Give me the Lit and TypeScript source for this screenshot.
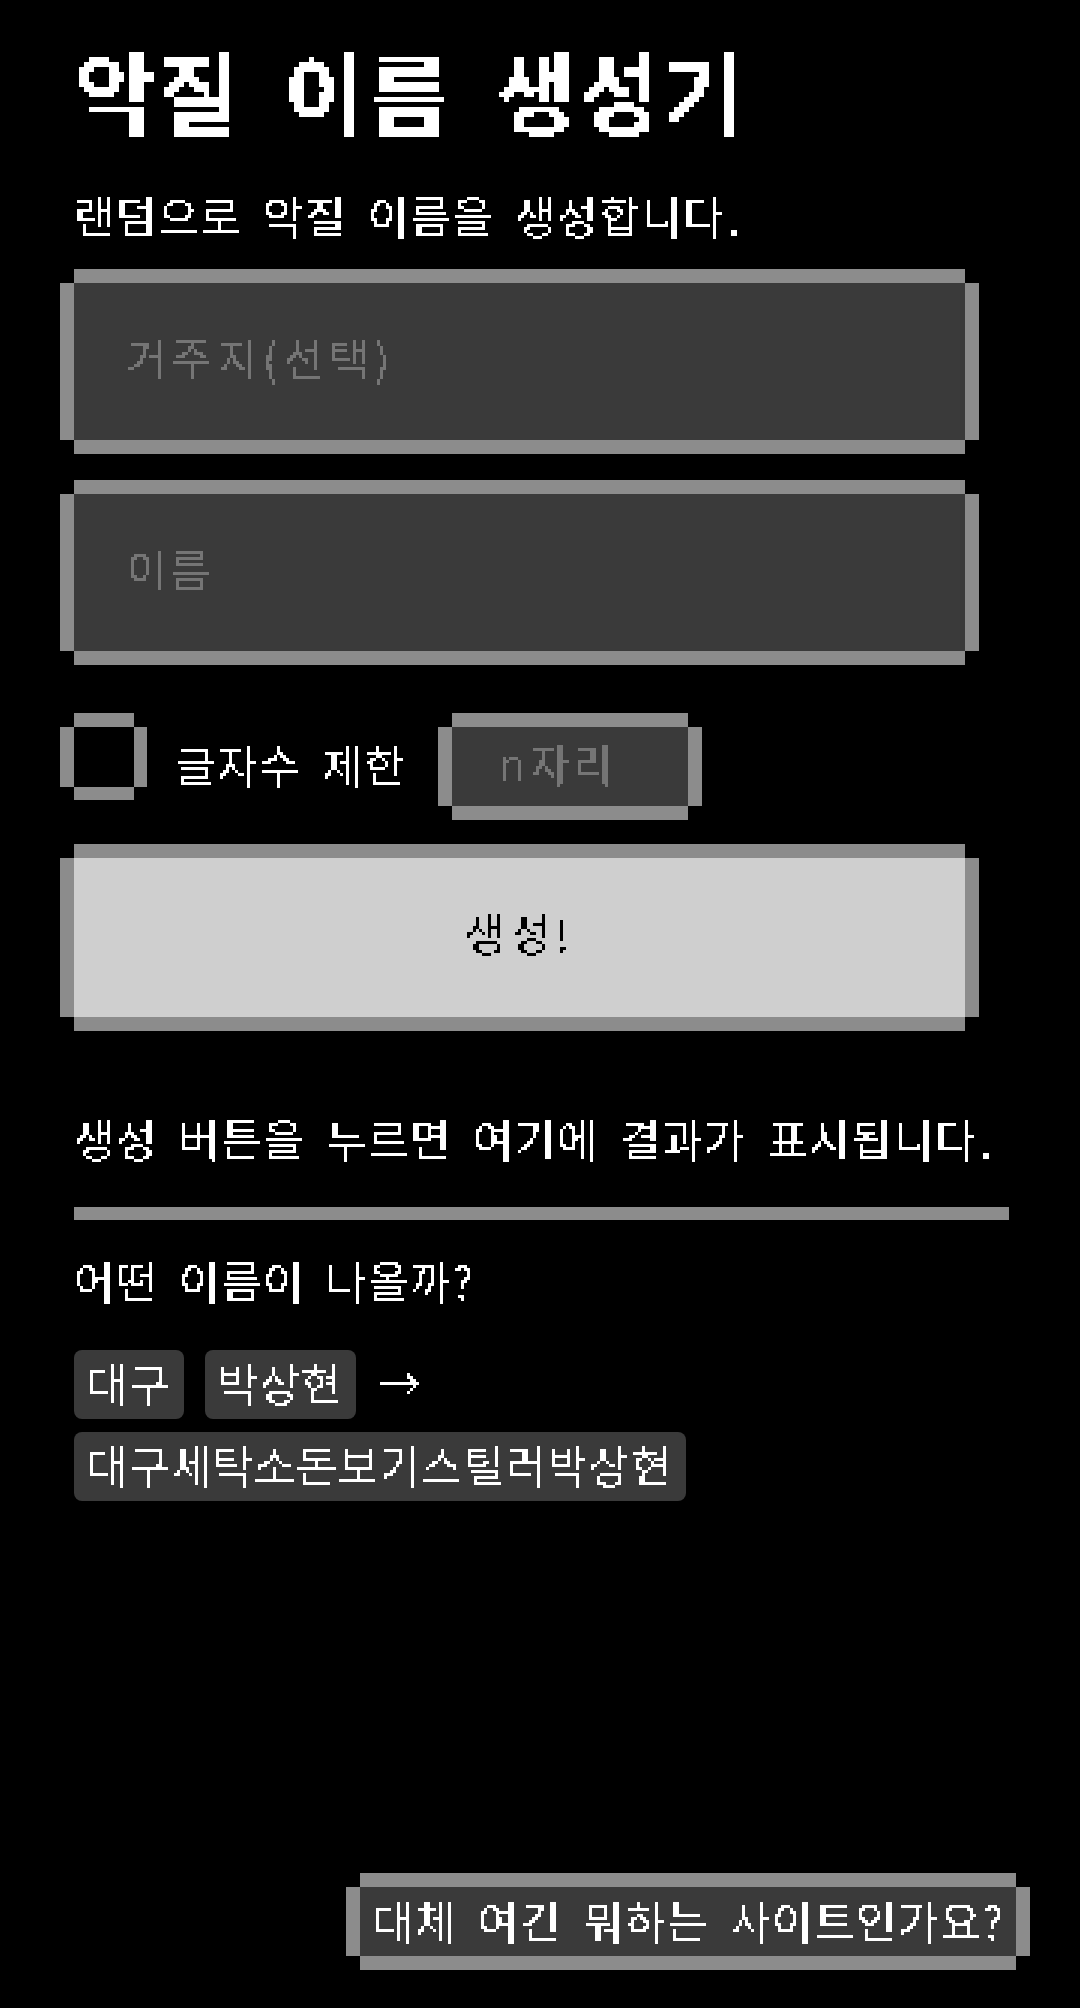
import { LitElement, html, css } from "lit";
import { customElement } from "lit/decorators.js";

@customElement("app-root")
export class AppRoot extends LitElement {
  static styles = css`
    :host {
      display: block;
      position: relative;
      width: 1080px;
      height: 2008px;
      overflow: hidden;
      background: #000;
      color: #fff;
      font-family: "Noto Sans CJK KR", "Noto Sans", sans-serif;
      font-size: 44px;
      letter-spacing: 1.52px;
      word-spacing: 9.6px;
      line-height: 42px;
    }
    .defs { position: absolute; width: 0; height: 0; }
    .page {
      box-sizing: border-box;
      width: 1080px;
      padding: 47px 71px 0 74px;
      display: flex;
      flex-direction: column;
    }
    .tx { filter: url(#px3); }
    h1 {
      margin: 0;
      font-size: 88px;
      line-height: 84px;
      letter-spacing: 3.04px;
      word-spacing: 19.2px;
      font-weight: 700;
      filter: url(#px5);
    }
    .sub { margin: 63px 0 0; }
    .dot { margin-left: 3px; }
    .box {
      background: #3a3a3a;
      box-shadow: 0 -14px 0 #8c8c8c, 0 14px 0 #8c8c8c, -14px 0 0 #8c8c8c, 14px 0 0 #8c8c8c;
    }
    .field { width: 891px; height: 157px; flex: none; margin-top: 47px; display: flex; }
    .field + .field { margin-top: 54px; }
    input.text {
      width: 100%;
      min-width: 0;
      border: 0;
      outline: 0;
      background: transparent;
      color: #fff;
      font: inherit;
      letter-spacing: 3px;
      padding: 0 0 9px 52px;
      filter: url(#px3);
    }
    input.text::placeholder { color: #757575; opacity: 1; }
    input.wide { letter-spacing: 5.2px; }
    .limit {
      display: flex;
      align-items: flex-start;
      margin-top: 76px;
      height: 79px;
    }
    .check {
      appearance: none;
      margin: 0;
      width: 60px;
      height: 60px;
      background: #000;
      box-shadow: 0 -14px 0 #8c8c8c, 0 13px 0 #8c8c8c, -14px 0 0 #8c8c8c, 13px 0 0 #8c8c8c;
    }
    .limit label { margin: 16px 0 0 41px; width: 263px; flex: none; }
    .small { width: 236px; height: 79px; flex: none; margin-left: 14px; display: flex; }
    .small input.text { padding: 0 0 7px 47px; }
    .go {
      margin-top: 52px;
      width: 891px;
      height: 159px;
      flex: none;
      border: 0;
      padding: 0 0 12px;
      background: #cfcfcf;
      color: #000;
      font: inherit;
      letter-spacing: 5px;
      box-shadow: 0 -14px 0 #8c8c8c, 0 14px 0 #8c8c8c, -14px 0 0 #8c8c8c, 14px 0 0 #8c8c8c;
    }
    .go span { display: block; filter: url(#px3); }
    .result { margin: 100px 0 0; white-space: nowrap; }
    .rule { height: 13px; background: #8c8c8c; margin-top: 48px; flex: none; }
    .q { margin: 39px 0 0; }
    .examples { display: flex; flex-direction: column; gap: 13px; margin-top: 49px; }
    .line { display: flex; align-items: center; gap: 21px; }
    .tag {
      height: 69px;
      box-sizing: border-box;
      display: flex;
      align-items: center;
      padding: 0 13px 5px;
      background: #3a3a3a;
      border-radius: 8px;
      letter-spacing: 1.36px;
    }
    .arrow { padding-bottom: 6px; }
    .help {
      position: absolute;
      right: 64px;
      bottom: 52px;
      width: 656px;
      height: 69px;
      display: flex;
      align-items: center;
      box-sizing: border-box;
      padding: 0 0 4px 13px;
      color: #fff;
      white-space: nowrap;
    }
  `;

  render() {
    return html`
      <svg class="defs" aria-hidden="true">
        <filter id="px3" color-interpolation-filters="sRGB">
          <feFlood x="1" y="1" width="1" height="1" />
          <feComposite width="3" height="3" />
          <feTile result="a" />
          <feComposite in="SourceGraphic" in2="a" operator="in" />
          <feMorphology operator="dilate" radius="1" />
          <feComponentTransfer>
            <feFuncA type="discrete" tableValues="0 0 1 1" />
          </feComponentTransfer>
        </filter>
        <filter id="px5" color-interpolation-filters="sRGB">
          <feFlood x="2" y="2" width="1" height="1" />
          <feComposite width="5" height="5" />
          <feTile result="a" />
          <feComposite in="SourceGraphic" in2="a" operator="in" />
          <feMorphology operator="dilate" radius="2" />
          <feComponentTransfer>
            <feFuncA type="discrete" tableValues="0 0 1 1" />
          </feComponentTransfer>
        </filter>
      </svg>
      <main class="page">
        <h1>악질 이름 생성기</h1>
        <p class="sub tx">랜덤으로 악질 이름을 생성합니다<span class="dot">.</span></p>
        <div class="box field"><input class="text wide" placeholder="거주지(선택)" /></div>
        <div class="box field"><input class="text" placeholder="이름" /></div>
        <div class="limit">
          <input class="check" type="checkbox" id="limit" />
          <label class="tx" for="limit">글자수 제한</label>
          <div class="box small"><input class="text" placeholder="n자리" /></div>
        </div>
        <button class="go"><span>생성!</span></button>
        <p class="result tx">생성 버튼을 누르면 여기에 결과가 표시됩니다<span class="dot">.</span></p>
        <div class="rule"></div>
        <p class="q tx">어떤 이름이 나올까?</p>
        <div class="examples">
          <div class="line">
            <span class="tag"><span class="tx">대구</span></span>
            <span class="tag"><span class="tx">박상현</span></span>
            <span class="tx arrow">→</span>
          </div>
          <div class="line">
            <span class="tag"><span class="tx">대구세탁소돈보기스틸러박상현</span></span>
          </div>
        </div>
      </main>
      <div class="box help"><span class="tx">대체 여긴 뭐하는 사이트인가요?</span></div>
    `;
  }
}
